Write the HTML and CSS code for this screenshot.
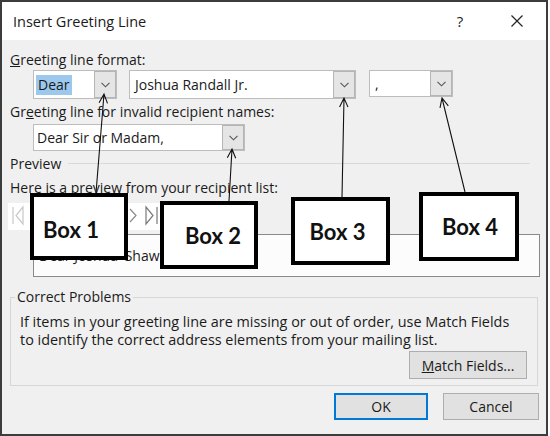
FILE: index.html
```html
<!DOCTYPE html>
<html>
<head>
<meta charset="utf-8">
<link rel="stylesheet" href="styles.css">
</head>
<body>
<div class="page">
  <div class="window">
    <div class="titlebar">
      <span class="title">Insert Greeting Line</span>
      <span class="help">?</span>
      <span class="close"><svg width="12" height="12" viewBox="0 0 12 12"><path d="M0.5 0.5 L11.5 11.5 M11.5 0.5 L0.5 11.5" stroke="#222" stroke-width="1.2" fill="none"/></svg></span>
    </div>
    <div class="body">
      <div class="label"><u>G</u>reeting line format:</div>
      <div class="combos">
        <div class="combo c-dear"><span class="val"><span class="sel">Dear</span></span><span class="btn"><svg width="9" height="6" viewBox="0 0 9 6"><path d="M0.5 0.8 L4.5 4.8 L8.5 0.8" stroke="#555" stroke-width="1.1" fill="none"/></svg></span></div>
        <div class="combo c-name"><span class="val">Joshua Randall Jr.</span><span class="btn"><svg width="9" height="6" viewBox="0 0 9 6"><path d="M0.5 0.8 L4.5 4.8 L8.5 0.8" stroke="#555" stroke-width="1.1" fill="none"/></svg></span></div>
        <div class="combo c-punct"><span class="val">,</span><span class="btn"><svg width="9" height="6" viewBox="0 0 9 6"><path d="M0.5 0.8 L4.5 4.8 L8.5 0.8" stroke="#555" stroke-width="1.1" fill="none"/></svg></span></div>
      </div>
      <div class="label label2">Gr<u>e</u>eting line for invalid recipient names:</div>
      <div class="combos combos2">
        <div class="combo c-sir"><span class="val">Dear Sir or Madam,</span><span class="btn"><svg width="9" height="6" viewBox="0 0 9 6"><path d="M0.5 0.8 L4.5 4.8 L8.5 0.8" stroke="#555" stroke-width="1.1" fill="none"/></svg></span></div>
      </div>
      <div class="group-head"><span>Preview</span><span class="rule"></span></div>
      <div class="label here">Here is a preview from your recipient list:</div>
      <div class="nav">
        <svg width="162" height="27" viewBox="0 0 162 27">
          <g fill="none" stroke-width="1.2">
            <path d="M5 4 V21 M15 4 L8 12.5 L15 21 Z" stroke="#c9c9c9"/>
            <path d="M34 5 L28 12.5 L34 20" stroke="#c9c9c9"/>
            <path d="M122 6 L128 12.5 L122 19" stroke="#8a8a8a"/>
            <path d="M138 4 L145 12.5 L138 21 Z M149 4 V21" stroke="#7a7a7a"/>
          </g>
        </svg>
      </div>
      <div class="preview">Dear Joshua 'Shaw Randall Jr.,</div>
      <fieldset class="problems">
        <legend>Correct Problems</legend>
        <div class="msg">
          <div class="msg-line">If items in your greeting line are missing or out of order, use Match Fields</div>
          <div class="msg-line">to identify the correct address elements from your mailing list.</div>
        </div>
        <div class="mf-row"><button class="btn-std mf"><u>M</u>atch Fields...</button></div>
      </fieldset>
      <div class="actions">
        <button class="btn-std ok">OK</button>
        <button class="btn-std cancel">Cancel</button>
      </div>
    </div>
  </div>
  <div class="overlay">
    <svg class="arrows" width="550" height="436" viewBox="0 0 550 436">
      <g stroke="#111" stroke-width="1.1" fill="none">
        <path d="M96 193 L104 94 M99.1 102.7 L104 94 L107.5 103.4"/>
        <path d="M229 201 L232 149 M227.3 157.8 L232 149 L235.7 158.3"/>
        <path d="M342 197 L344 98 M339.6 107 L344 98 L348 107.1"/>
        <path d="M465 192 L442 98 M440 107.8 L442 98 L448.3 105.8"/>
      </g>
    </svg>
    <div class="box box1">Box 1</div>
    <div class="box box2">Box 2</div>
    <div class="box box3">Box 3</div>
    <div class="box box4">Box 4</div>
  </div>
</div>
</body>
</html>
```
FILE: styles.css
```css
* { box-sizing: border-box; }
html, body { margin: 0; background: #fff; }
body {
  font-family: "Open Sans", "Noto Sans", sans-serif;
  font-size: 14px;
  color: #1b1b1b;
}
.page { position: relative; width: 550px; height: 436px; }
.window {
  width: 548px;
  height: 436px;
  border: 2px solid #3c3c3c;
  display: flex;
  flex-direction: column;
}
.titlebar {
  height: 38px;
  background: #fff;
  display: flex;
  align-items: center;
  padding-left: 11px;
}
.title { flex: 1; font-size: 14.5px; }
.help { width: 12px; text-align: center; font-size: 15px; margin-right: 45px; }
.close { width: 12px; height: 12px; margin-right: 23px; display: flex; }
.body {
  flex: 1;
  background: #f0f0f0;
  padding: 11px 8px 0;
}
.label { line-height: 18px; height: 18px; white-space: nowrap; }
.label2 { margin-top: 4px; }
.combos { display: flex; margin: 1px 0 0 23px; gap: 12px; }
.combos2 { margin-top: 3px; }
.combo {
  height: 29px;
  border: 1px solid #bdbdbd;
  background: #fff;
  display: flex;
}
.combo .val { flex: 1; display: flex; align-items: center; padding-left: 5px; white-space: nowrap; overflow: hidden; }
.combo .btn {
  width: 22px;
  background: #e5e5e5;
  border: 1px solid #b5b5b5;
  display: flex;
  align-items: center;
  justify-content: center;
}
.c-dear { width: 84px; }
.c-dear .val { padding-left: 2px; }
.sel { background: #9dc8ee; padding: 1px 2px; line-height: 18px; }
.c-name { width: 227px; }
.c-punct { width: 84px; height: 27px; margin-left: 1px; }
.c-sir { width: 212px; height: 27px; }
.c-sir .val { padding-left: 3px; }
.group-head { display: flex; align-items: center; margin-top: 3px; height: 18px; }
.group-head .rule { flex: 1; height: 1px; background: #d9d9d9; margin: 0 8px 0 7px; }
.here { margin-top: 7px; }
.nav { margin: 6px 0 0 -2px; width: 162px; height: 27px; background: #fff; }
.nav svg { display: block; }
.preview {
  margin: 4px -2px 0 23px;
  height: 43px;
  border: 1px solid #8a8a8a;
  background: #fcfcfc;
  display: flex;
  align-items: center;
  padding: 0 0 0 5px;
  white-space: nowrap;
}
.problems {
  margin: 11px 0 0;
  padding: 0 10px 6px 4px;
  border: 1px solid #d6d6d6;
}
.problems legend { padding: 0 2px; line-height: 18px; }
.msg { margin: 7px 0 0 5px; font-size: 14.4px; }
.msg-line { height: 17px; line-height: 17px; white-space: nowrap; overflow: visible; }
.msg-line + .msg-line { margin-top: 1px; }
.mf-row { display: flex; justify-content: flex-end; margin-top: 3px; }
.btn-std {
  font: inherit;
  color: inherit;
  background: #e1e1e1;
  border: 1px solid #adadad;
  padding: 0;
}
.mf { width: 118px; height: 28px; }
.actions { display: flex; justify-content: flex-end; gap: 15px; margin: 7px -1px 0 0; }
.ok { width: 94px; height: 27px; border: 2px solid #0078d7; }
.cancel { width: 96px; height: 27px; }
.overlay { position: absolute; left: 0; top: 0; width: 550px; height: 436px; pointer-events: none; }
.arrows { position: absolute; left: 0; top: 0; }
.box {
  position: absolute;
  background: #fff;
  border: 4px solid #000;
  display: flex;
  align-items: center;
  justify-content: center;
  font-family: Lato, "Open Sans", sans-serif;
  font-weight: 700;
  font-size: 22px;
  color: #111;
}
.box1 { left: 30px; top: 193px; width: 98px; height: 67px; padding: 6px 16px 0 0; }
.box2 { left: 160px; top: 201px; width: 98px; height: 68px; padding: 0 0 0 8px; }
.box3 { left: 291px; top: 197px; width: 99px; height: 68px; padding: 0 6px 0 0; }
.box4 { left: 419px; top: 192px; width: 100px; height: 69px; padding: 0 0 0 2px; }
```
